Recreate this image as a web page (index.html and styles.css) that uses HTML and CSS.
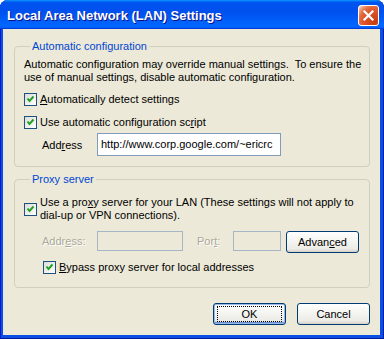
FILE: index.html
```html
<!DOCTYPE html>
<html>
<head>
<meta charset="utf-8">
<link rel="stylesheet" href="styles.css">
</head>
<body>
<div class="window">
  <div class="titlebar">
    <span class="title">Local Area Network (LAN) Settings</span>
    <span class="close"><svg width="13" height="13" viewBox="0 0 13 13"><path d="M2.5 2.5 L10.5 10.5 M10.5 2.5 L2.5 10.5" stroke="#fff" stroke-width="2.2" stroke-linecap="square"/></svg></span>
  </div>
  <div class="client">
    <fieldset class="group group-auto">
      <legend>Automatic configuration</legend>
      <p class="desc">Automatic configuration may override manual settings.&nbsp; To ensure the<br>use of manual settings, disable automatic configuration.</p>
      <label class="check row-detect"><span class="box"><svg width="11" height="11" viewBox="0 0 11 11"><path d="M2.5 4.5 L4.5 7 L8.5 2.5" fill="none" stroke="#21a121" stroke-width="2"/></svg></span><span class="lbl"><u>A</u>utomatically detect settings</span></label>
      <label class="check row-script"><span class="box"><svg width="11" height="11" viewBox="0 0 11 11"><path d="M2.5 4.5 L4.5 7 L8.5 2.5" fill="none" stroke="#21a121" stroke-width="2"/></svg></span><span class="lbl">Use automatic configuration sc<u>r</u>ipt</span></label>
      <div class="addr-row"><span class="addr-label">Add<u>r</u>ess</span><span class="edit url">http://www.corp.google.com/~ericrc</span></div>
    </fieldset>
    <fieldset class="group group-proxy">
      <legend>Proxy server</legend>
      <label class="check multi"><span class="box"><svg width="11" height="11" viewBox="0 0 11 11"><path d="M2.5 4.5 L4.5 7 L8.5 2.5" fill="none" stroke="#21a121" stroke-width="2"/></svg></span><span class="lbl">Use a pro<u>x</u>y server for your LAN (These settings will not apply to<br>dial-up or VPN connections).</span></label>
      <div class="proxy-row">
        <span class="dis-label addr-l">Addr<u>e</u>ss:</span>
        <span class="edit disabled paddr"></span>
        <span class="dis-label port-l">Por<u>t</u>:</span>
        <span class="edit disabled pport"></span>
        <span class="btn adv">Advan<u>c</u>ed</span>
      </div>
      <label class="check bypass"><span class="box"><svg width="11" height="11" viewBox="0 0 11 11"><path d="M2.5 4.5 L4.5 7 L8.5 2.5" fill="none" stroke="#21a121" stroke-width="2"/></svg></span><span class="lbl"><u>B</u>ypass proxy server for local addresses</span></label>
    </fieldset>
    <div class="actions">
      <span class="btn default"><span class="focus">OK</span></span>
      <span class="btn">Cancel</span>
    </div>
  </div>
</div>
</body>
</html>
```
FILE: styles.css
```css
* { box-sizing: border-box; }
html, body { margin: 0; padding: 0; background: #fff; }
body { width: 384px; height: 339px; overflow: hidden; font-family: "Liberation Sans", Arial, sans-serif; font-size: 11px; color: #000; }

.window {
  width: 384px; height: 339px;
  display: flex; flex-direction: column;
  background: #0b4ee6;
  border-radius: 8px 8px 0 0;
  box-shadow: inset 1px 0 #0019cf, inset -1px 0 #001ea0, inset 0 -1px #001a9c;
  padding: 0 4px 4px 3px;
}
.titlebar {
  height: 29px; margin: 0 -4px 0 -3px;
  display: flex; align-items: center; justify-content: space-between;
  padding: 0 5px 0 7px;
  border-radius: 8px 8px 0 0;
  background: linear-gradient(180deg, #0997ff 0, #0053ee 8%, #0050ee 40%, #0066ff 88%, #0066ff 93%, #005bff 95%, #003dd7 96%, #003dd7 100%);
}
.title {
  color: #fff; font-weight: bold; font-size: 13px;
  font-family: "Liberation Sans", Arial, sans-serif;
  text-shadow: 1px 1px #0f1089;
  margin-top: 2px;
}
.close {
  width: 21px; height: 21px; margin-top: 2px;
  border: 1px solid #fff; border-radius: 3px;
  background: radial-gradient(circle at 85% 85%, #c43c10 0%, #e0542a 50%, #e2683f 68%, #f4a88a 88%, #fff 100%);
  display: flex; align-items: center; justify-content: center;
}
.close svg { display: block; }

.client {
  flex: 1; background: #ece9d8;
  display: flex; flex-direction: column;
  padding: 0 10px 0 11px;
}
.group {
  border: 1px solid #d0d0bf; border-radius: 4px;
  margin: 0; padding: 0 9px 0 9px;
  min-width: 0;
}
.group legend {
  color: #0046d5; padding: 0 2px; margin-left: 6px; line-height: 13px;
}
.group-auto { margin-top: 11px; padding-bottom: 10px; }
.group-proxy { margin-top: 6px; padding-bottom: 13px; }

.desc { margin: 5px 0 0; line-height: 13px; white-space: nowrap; }

.check { display: flex; align-items: center; line-height: 13px; }
.check .box {
  width: 13px; height: 13px; flex: none;
  border: 1px solid #1c5180;
  background: linear-gradient(135deg, #dcdcd7, #fff);
  display: flex; align-items: center; justify-content: center;
}
.check .box svg { display: block; }
.check .lbl { margin-left: 3px; white-space: nowrap; }
.row-detect { margin-top: 9px; }
.row-script { margin-top: 10px; }

.addr-row { display: flex; align-items: center; margin-top: 4px; padding-left: 18px; height: 23px; }
.addr-label { width: 55px; }
.edit {
  display: block; border: 1px solid #7f9db9; background: #fff;
  white-space: nowrap; overflow: hidden;
  padding: 0 3px; line-height: 21px;
}
.url { width: 184px; height: 23px; }

.multi { margin-top: 10px; }
.proxy-row { display: flex; align-items: flex-start; margin-top: 9px; padding-left: 18px; height: 22px; }
.dis-label { color: #aca899; text-shadow: 1px 1px #fff; line-height: 20px; }
.addr-l { width: 55px; }
.port-l { width: 36px; margin-left: 14px; }
.disabled { background: #ece9d8; border-color: #a7b6c6; height: 20px; }
.paddr { width: 86px; }
.pport { width: 48px; }
.btn {
  display: flex; align-items: center; justify-content: center;
  height: 22px; width: 73px;
  border: 1px solid #003c74; border-radius: 3px;
  background: linear-gradient(180deg, #fff 0%, #f3f3ef 50%, #ecebe6 85%, #d6d0c5 100%);
  color: #000;
}
.adv { margin-left: 5px; }
.bypass { margin-top: 8px; padding-left: 19px; }

.actions { display: flex; justify-content: flex-end; gap: 11px; margin-top: 15px; }
.default { box-shadow: inset 0 0 0 1px #98b8ea, inset 0 -1px 0 1px #6b8fd3; }
.focus { display: flex; align-items: center; justify-content: center; width: 65px; height: 16px; border: 1px dotted #000; }
```
